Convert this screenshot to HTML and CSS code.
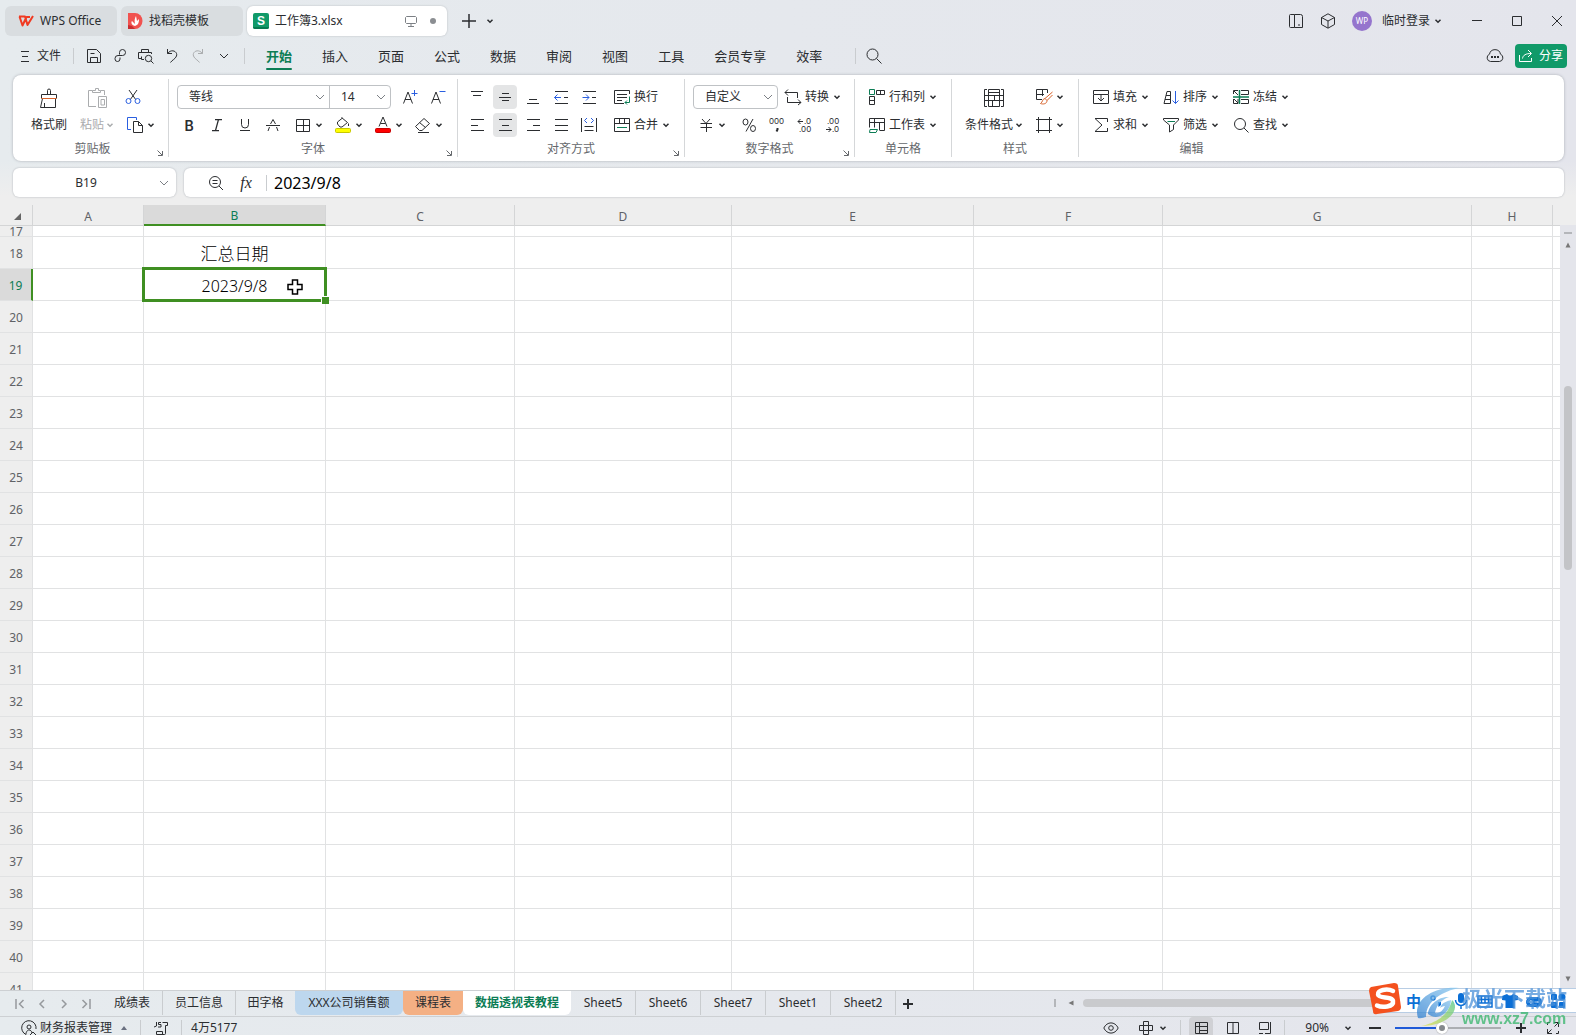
FILE: index.html
```html
<!DOCTYPE html>
<html lang="zh-CN">
<head>
<meta charset="utf-8">
<title>工作簿3.xlsx - WPS Office</title>
<link rel="stylesheet" href="styles.css">
</head>
<body>
<svg class="sprite" aria-hidden="true">
  <symbol id="caret" viewBox="0 0 8 8"><path d="M1.5 2.8 4 5.2 6.5 2.8" stroke-width="1.5"/></symbol>
  <symbol id="chevron" viewBox="0 0 10 10"><path d="M1 3 5 7 9 3"/></symbol>
  <symbol id="launcher" viewBox="0 0 8 8"><path d="M1.5 1.5 6 6M6.500 2v4.500H2"/></symbol>
</svg>

<header class="title-bar">
  <nav class="doc-tabs" aria-label="文档">
    <button class="doc-tab home-tab">
      <svg width="16" height="12" viewBox="0 0 16 12"><path d="M1 1.500H7L9.500 10 15 1M1.500 1.500 4.500 10.500 8.500 2H12" stroke="#f03a22" stroke-width="2" fill="none" stroke-linejoin="round"/></svg>
      <span>WPS Office</span>
    </button>
    <button class="doc-tab docer-tab">
      <svg width="15" height="16" viewBox="0 0 15 16"><path d="M0 0H7A7.500 8 0 0 1 7 16H0Z" fill="#f1524f"/><path d="M0 12V16H7L4 13Z" fill="#c92d31"/><path d="M7 13C3 12 3 9 4 8L7 11C6 7 7 5 8 3L9 8 11 6C11 10 10 12 7 13Z" fill="#fff"/></svg>
      <span>找稻壳模板</span>
    </button>
    <button class="doc-tab current-tab">
      <svg width="16" height="16" viewBox="0 0 16 16"><rect width="16" height="16" rx="2" fill="#119a69"/><path d="M0 14H16V14A2 2 0 0 1 14 16H2A2 2 0 0 1 0 14Z" fill="#087a51"/><text x="8" y="12" text-anchor="middle" class="badge-letter">S</text></svg>
      <span class="doc-name">工作簿3.xlsx</span>
      <svg class="line muted" width="12" height="12" viewBox="0 0 12 12"><path d="M1.500 1.500H10.500L11.500 2.500V7.500L10.500 8.500H1.500L.5 7.500V2.500ZM6 9V11.500M3 11.500H9"/></svg>
      <span class="unsaved-dot"></span>
    </button>
  </nav>
  <button class="icon-btn new-tab" aria-label="新建"><svg class="line" width="14" height="14" viewBox="0 0 14 14"><path d="M7 0V14M0 7H14" stroke-width="1.500"/></svg></button>
  <button class="tab-list" aria-label="标签列表"><svg class="line" width="8" height="8"><use href="#caret"/></svg></button>
  <div class="spacer"></div>
  <button class="win-btn" aria-label="侧栏"><svg class="line" width="16" height="16" viewBox="0 0 16 16"><path d="M6.500 1.500H2.500Q1.500 1.500 1.500 2.500V13.500Q1.500 14.500 2.500 14.500H6.500ZM6.500 1.500H12.500Q14.500 1.500 14.500 3.500V14.500H6.500M10 12H12"/></svg></button>
  <button class="win-btn" aria-label="应用"><svg class="line" width="16" height="16" viewBox="0 0 16 16"><path d="M8 .8 14.500 4.500V11.500L8 15.200 1.500 11.500V4.500ZM1.500 4.500 8 8 14.500 4.500M8 8V15"/></svg></button>
  <button class="account"><span class="avatar">WP</span><span>临时登录</span><svg class="line" width="8" height="8"><use href="#caret"/></svg></button>
  <button class="frame-btn" aria-label="最小化"><svg class="line" width="12" height="12" viewBox="0 0 12 12"><path d="M1 5.500H11"/></svg></button>
  <button class="frame-btn" aria-label="最大化"><svg class="line" width="12" height="12" viewBox="0 0 12 12"><path d="M1.500 1.500H10.500V10.500H1.500Z"/></svg></button>
  <button class="frame-btn" aria-label="关闭"><svg class="line" width="12" height="12" viewBox="0 0 12 12"><path d="M1 1 11 11M11 1 1 11"/></svg></button>
</header>

<div class="menu-bar">
  <button class="file-btn"><svg class="line" width="10" height="12" viewBox="0 0 10 12"><path d="M1 1.500H9M2 6.500H8M1 11.500H9"/></svg><span>文件</span></button>
  <span class="rule"></span>
  <div class="quick">
    <button class="quick-btn" aria-label="保存"><svg class="line" width="16" height="16" viewBox="0 0 16 16"><path d="M1.500 14.500V1.500H10.500L14.500 5.500V14.500ZM4.500 14.500V9.500H11.500V14.500M4.500 5.500H8.500"/></svg></button>
    <button class="quick-btn" aria-label="输出"><svg class="line" width="16" height="16" viewBox="0 0 16 16"><path d="M7.500 6.500V4.500A3 3 0 1 1 10.500 7.500H6A3 3 0 0 0 3 10.500V11A2.500 2.500 0 0 0 8 11V9.500"/></svg></button>
    <button class="quick-btn" aria-label="打印预览"><svg class="line" width="16" height="16" viewBox="0 0 16 16"><path d="M3.500 4.500V1.500H10.500V4.500M6 11.500H3.500V8.500M3 10.500H.5V4.500H13.500V6M15.500 15.500 13 13"/><circle cx="10.500" cy="10.500" r="3.200"/></svg></button>
    <button class="quick-btn" aria-label="撤消"><svg class="line" width="16" height="16" viewBox="0 0 16 16"><path d="M3.500 1V5.500H8M3.500 5.500C8 0 14 4 12.500 8C11.500 11 8 12 6.500 14.500"/></svg></button>
    <button class="quick-btn" aria-label="恢复" disabled><svg class="line" width="16" height="16" viewBox="0 0 16 16"><path d="M12.500 1V5.500H8M12.500 5.500C8 0 2 4 3.500 8C4.500 11 8 12 9.500 14.500"/></svg></button>
    <button class="quick-btn" aria-label="更多"><svg class="line" width="10" height="10"><use href="#chevron"/></svg></button>
  </div>
  <span class="rule"></span>
  <nav class="menu-tabs" aria-label="功能区">
    <button class="menu-tab active">开始</button>
    <button class="menu-tab">插入</button>
    <button class="menu-tab">页面</button>
    <button class="menu-tab">公式</button>
    <button class="menu-tab">数据</button>
    <button class="menu-tab">审阅</button>
    <button class="menu-tab">视图</button>
    <button class="menu-tab">工具</button>
    <button class="menu-tab">会员专享</button>
    <button class="menu-tab">效率</button>
  </nav>
  <span class="rule find-rule"></span>
  <button class="search-btn" aria-label="搜索"><svg class="line" width="16" height="16" viewBox="0 0 16 16"><circle cx="6.500" cy="6.500" r="5.500"/><path d="M10.500 10.500 15.500 15.500"/></svg></button>
  <div class="spacer"></div>
  <button class="cloud-btn" aria-label="云"><svg class="line" width="18" height="16" viewBox="0 0 18 16"><path d="M4.500 13.500A3.800 3.800 0 0 1 3.500 6.200 5.600 5.600 0 0 1 14.500 6.200 3.800 3.800 0 0 1 13.500 13.500Z"/><path d="M5 9H7M8 9H10M11 9H13" stroke-width="2"/></svg></button>
  <button class="share-btn"><svg class="line" width="14" height="14" viewBox="0 0 14 14"><path d="M.5 6V12.500H12.500V9M3.500 9.500C4 6 7 4.500 12 4.500M9 1 12.500 4.500 9 8"/></svg><span>分享</span></button>
</div>

<section class="ribbon" aria-label="开始">
  <div class="group clipboard">
    <div class="tools">
      <button class="big"><svg class="line" width="20" height="20" viewBox="0 0 20 20"><path d="M8.500 6.500V2.500A1.500 1.500 0 0 1 11.500 2.500V6.500M2.500 10.500V6.500H17.500V10.500M3.500 10.500 1.500 19.500H16.500V10.500M5.500 19V15"/><path class="orange" d="M2.500 10.500H17.500"/></svg><span>格式刷</span></button>
      <button class="big" disabled><svg class="line" width="20" height="20" viewBox="0 0 20 20"><path d="M5.500 2.500H1.500V18.500H9M13.500 2.500H17.500V7M5.500 4.500V2.500H8.500V.5H11.500V2.500H13.500V4.500ZM11.500 8.500H19.500V19.500H11.500ZM14 11.500H17.500V17H14Z"/></svg><span>粘贴<svg class="line" width="8" height="8"><use href="#caret"/></svg></span></button>
      <div class="stack">
        <button class="cut" aria-label="剪切"><svg class="line" width="16" height="16" viewBox="0 0 16 16"><path d="M4 1 11 11M12 1 5 11"/><g class="blue"><circle cx="3.500" cy="12" r="2.500"/><circle cx="12.500" cy="12" r="2.500"/></g></svg></button>
        <button class="drop" aria-label="复制"><svg class="line" width="20" height="20" viewBox="0 0 20 20"><path class="blue" d="M6 14.500H2.500V2.500H11.500V5"/><path d="M8.500 6.500H13.500L17.500 10.500V17.500H8.500ZM13.500 6.500V10.500H17.500"/></svg><svg class="line" width="8" height="8"><use href="#caret"/></svg></button>
      </div>
    </div>
    <div class="caption"><span>剪贴板</span><svg class="line" width="8" height="8"><use href="#launcher"/></svg></div>
  </div>

  <div class="group font">
    <div class="tools rows">
      <div class="row">
        <div class="combo">
          <label class="pick family"><select aria-label="字体"><option>等线</option></select><svg class="line muted" width="10" height="10"><use href="#chevron"/></svg></label>
          <label class="pick size"><select aria-label="字号"><option>14</option></select><svg class="line muted" width="10" height="10"><use href="#chevron"/></svg></label>
        </div>
        <button class="tool" aria-label="增大字号"><svg class="line" width="16" height="16" viewBox="0 0 16 16"><path d="M1.500 14.500 6 3 10.500 14.500M3 10.500H9"/><path class="blue" d="M12.500 1V7M9.500 4.500H15.500"/></svg></button>
        <button class="tool" aria-label="减小字号"><svg class="line" width="16" height="16" viewBox="0 0 16 16"><path d="M1.500 14.500 6 3 10.500 14.500M3 10.500H9"/><path class="blue" d="M9.500 2.500H15.500"/></svg></button>
      </div>
      <div class="row">
        <button class="tool letter bold">B</button>
        <button class="tool" aria-label="倾斜"><svg class="line" width="12" height="12" viewBox="0 0 12 12"><path d="M4 .5H11M1 11.500H8M7.500 .5 4.500 11.500" stroke-width="1.250"/></svg></button>
        <button class="tool" aria-label="下划线"><svg class="line" width="12" height="12" viewBox="0 0 12 12"><path d="M2.500 0V5.500A3.500 3.500 0 0 0 9.500 5.500V0M1 11.500H11"/></svg></button>
        <button class="tool" aria-label="删除线"><svg class="line" width="14" height="12" viewBox="0 0 14 12"><path d="M0 6.500H14M4.500 5 7 .5 9.500 5M3.500 8 2 12M10.500 8 12 12"/></svg></button>
        <div class="row colors">
        <button class="drop" aria-label="边框"><svg class="line" width="20" height="20" viewBox="0 0 20 20"><path d="M3.500 4.500H16.500V16.500H3.500ZM10.500 4.500V16.500M3.500 10.500H16.500"/></svg><svg class="line" width="8" height="8"><use href="#caret"/></svg></button>
        <button class="drop" aria-label="填充颜色"><svg class="line" width="20" height="20" viewBox="0 0 20 20"><path d="M8.500 2.500 14.500 7.500 9 12H7L4.500 9V7L9.500 3M15.500 8.500V11"/><rect x="2.500" y="13.500" width="15" height="4" rx="1" fill="#ff0" stroke="#c8c800"/></svg><svg class="line" width="8" height="8"><use href="#caret"/></svg></button>
        <button class="drop" aria-label="字体颜色"><svg class="line" width="20" height="20" viewBox="0 0 20 20"><path d="M6 11.500 10 2 14 11.500M7.500 8.500H12.500"/><rect x="2.500" y="13.500" width="15" height="4" rx="1" fill="#f00" stroke="#c80000"/></svg><svg class="line" width="8" height="8"><use href="#caret"/></svg></button>
        <button class="drop" aria-label="清除"><svg class="line" width="20" height="20" viewBox="0 0 20 20"><path d="M11 3.500 16.500 8.500 9 15.500H6.500L2.500 11.500ZM6.500 7.500 12.500 12.500M5 17.500H16"/></svg><svg class="line" width="8" height="8"><use href="#caret"/></svg></button>
        </div>
      </div>
    </div>
    <div class="caption"><span>字体</span><svg class="line" width="8" height="8"><use href="#launcher"/></svg></div>
  </div>

  <div class="group align">
    <div class="tools rows">
      <div class="row">
        <button class="tool" aria-label="顶端对齐"><svg class="line" width="14" height="14" viewBox="0 0 14 14"><path d="M1 1.500H13M3 5.500H11"/></svg></button>
        <button class="tool on" aria-label="垂直居中"><svg class="line" width="14" height="14" viewBox="0 0 14 14"><path d="M4 3.500H11M1 7.500H13M4 10.500H11"/></svg></button>
        <button class="tool" aria-label="底端对齐"><svg class="line" width="14" height="14" viewBox="0 0 14 14"><path d="M3 9.500H11M1 13.500H13"/></svg></button>
        <button class="tool" aria-label="减少缩进"><svg class="line" width="14" height="14" viewBox="0 0 14 14"><path d="M1 1.500H14M1 13.500H14M10 7.500H14"/><path class="blue" d="M.5 7.500H7M3.500 4.500.5 7.500 3.500 10.500"/></svg></button>
        <button class="tool" aria-label="增加缩进"><svg class="line" width="14" height="14" viewBox="0 0 14 14"><path d="M1 1.500H14M1 13.500H14M10 7.500H14"/><path class="blue" d="M.5 7.500H7M4 4.500 7 7.500 4 10.500"/></svg></button>
        <button class="wide after-tools"><svg class="line" width="16" height="16" viewBox="0 0 16 16"><path d="M10 14.500H.5V1.500H15.500V5M3 5.500H13M3 8.500H13M3 11.500H8"/><path class="green" d="M15.500 7.500V13.500H11M13 11.500 11 13.500 13 15.500"/></svg><span>换行</span></button>
      </div>
      <div class="row">
        <button class="tool" aria-label="左对齐"><svg class="line" width="14" height="14" viewBox="0 0 14 14"><path d="M1 1.500H14M1 7.500H8M1 12.500H14"/></svg></button>
        <button class="tool on" aria-label="水平居中"><svg class="line" width="14" height="14" viewBox="0 0 14 14"><path d="M1 1.500H14M4 7.500H11M1 12.500H14"/></svg></button>
        <button class="tool" aria-label="右对齐"><svg class="line" width="14" height="14" viewBox="0 0 14 14"><path d="M1 1.500H14M7 7.500H14M1 12.500H14"/></svg></button>
        <button class="tool" aria-label="两端对齐"><svg class="line" width="14" height="14" viewBox="0 0 14 14"><path d="M1 1.500H14M1 7.500H14M1 12.500H14"/></svg></button>
        <button class="tool" aria-label="分散对齐"><svg class="line" width="16" height="16" viewBox="0 0 16 16"><path d="M.5 1V15M15.500 1V15M3.500 9.500H12.500M3.500 13.500H12.500"/><path class="blue" d="M6 1 3.500 3.500 6 6M10 1 12.500 3.500 10 6"/></svg></button>
        <button class="wide after-tools"><svg class="line" width="16" height="16" viewBox="0 0 16 16"><path d="M.5 1.500H15.500V14.500H.5ZM.5 6.500H15.500M5.500 1.500V6.500M10.500 1.500V6.500"/><path class="green" d="M3 10.500H13"/></svg><span>合并</span><svg class="line" width="8" height="8"><use href="#caret"/></svg></button>
      </div>
    </div>
    <div class="caption"><span>对齐方式</span><svg class="line" width="8" height="8"><use href="#launcher"/></svg></div>
  </div>

  <div class="group number">
    <div class="tools rows">
      <div class="row">
        <div class="combo"><label class="pick format"><select aria-label="数字格式"><option>自定义</option></select><svg class="line muted" width="10" height="10"><use href="#chevron"/></svg></label></div>
        <button class="wide"><svg class="line" width="16" height="16" viewBox="0 0 16 16"><path d="M0 3.500H12.500V9M3 .5 0 3.500 3 6.500M2.500 8V13.500H16M13 10.500 16 13.500 13 16"/></svg><span>转换</span><svg class="line" width="8" height="8"><use href="#caret"/></svg></button>
      </div>
      <div class="row">
        <button class="drop" aria-label="货币"><svg class="line" width="20" height="20" viewBox="0 0 20 20"><path d="M6 4 10 8.500 14 4M4.500 8.500H16M4.500 12.500H16M10.500 8.500V17"/></svg><svg class="line" width="8" height="8"><use href="#caret"/></svg></button>
        <button class="tool percent" aria-label="百分比"><svg class="line" width="14" height="14" viewBox="0 0 14 14"><path d="M11 1 4 13.500"/><ellipse cx="3.500" cy="4" rx="2.500" ry="3"/><ellipse cx="11" cy="10.500" rx="2.500" ry="3"/></svg></button>
        <button class="tool" aria-label="千位分隔"><svg class="line" width="18" height="18" viewBox="0 0 18 18"><text class="digits" x="1" y="8">000</text><path d="M9.500 12V13.500L8.500 15.500" stroke-width="2"/></svg></button>
        <button class="tool" aria-label="增加小数位"><svg class="line" width="18" height="18" viewBox="0 0 18 18"><text class="digits" x="8" y="8">.0</text><text class="digits" x="3" y="16">.00</text><path d="M2 5.500H7M4.500 3 2 5.500 4.500 8"/></svg></button>
        <button class="tool" aria-label="减少小数位"><svg class="line" width="18" height="18" viewBox="0 0 18 18"><text class="digits" x="3" y="8">.00</text><text class="digits" x="8" y="16">.0</text><path d="M2 13.500H7M4.500 11 7 13.500 4.500 16"/></svg></button>
      </div>
    </div>
    <div class="caption"><span>数字格式</span><svg class="line" width="8" height="8"><use href="#launcher"/></svg></div>
  </div>

  <div class="group cells">
    <div class="tools rows">
      <button class="wide"><svg class="line" width="16" height="16" viewBox="0 0 16 16"><path d="M7.500 5.500V1.500H15.500V5.500ZM11.500 1.500V5.500M.5 7.500H5.500V15.500H.5ZM.5 11.500H5.500"/><path class="green" d="M.5 .5H5.500V5.500H.5Z"/></svg><span>行和列</span><svg class="line" width="8" height="8"><use href="#caret"/></svg></button>
      <button class="wide"><svg class="line" width="16" height="16" viewBox="0 0 16 16"><path d="M.5 10.500V1.500H15.500V13.500H11M.5 5.500H15.500M5.500 1.500V10.500M10.500 5.500V13.500"/><path class="green" d="M1 12.500H8.500L7 15.500H.5Z"/></svg><span>工作表</span><svg class="line" width="8" height="8"><use href="#caret"/></svg></button>
    </div>
    <div class="caption"><span>单元格</span></div>
  </div>

  <div class="group styles">
    <div class="tools">
      <button class="big conditional"><svg class="line" width="20" height="20" viewBox="0 0 20 20"><path d="M3 1.500H.5V18.500H3M17 1.500H19.500V18.500H17M4.500 1.500H15.500V18.500H4.500ZM.5 7.500H19.500M.5 12.500H19.500M10.500 7.500V12.500M8.500 12.500V18.500M4.500 4.500H15.500"/></svg><span>条件格式<svg class="line" width="8" height="8"><use href="#caret"/></svg></span></button>
      <div class="stack">
        <button class="drop" aria-label="表格样式"><svg class="line" width="20" height="20" viewBox="0 0 20 20"><path d="M8 12.500H2.500V2.500H13.500V6M2.500 7.500H10M8.500 2.500V9"/><path class="orange" d="M18.500 5 11 11.500 13 13.500 18.500 8M11 11.500C8 12 9 15 6.500 16.500 9 17.500 13 17 13 13.500"/></svg><svg class="line" width="8" height="8"><use href="#caret"/></svg></button>
        <button class="drop" aria-label="单元格样式"><svg class="line" width="20" height="20" viewBox="0 0 20 20"><path d="M2 4.500H18M2 15.500H18M4.500 2V18M15.500 2V18"/></svg><svg class="line" width="8" height="8"><use href="#caret"/></svg></button>
      </div>
    </div>
    <div class="caption"><span>样式</span></div>
  </div>

  <div class="group edit">
    <div class="tools matrix">
      <button class="wide"><svg class="line" width="16" height="16" viewBox="0 0 16 16"><path d="M.5 5V1.500H15.500V5M3.500 5.500H.5V14.500H15.500V5.500H12.500M3 5.500H13M8 5.500V11.500M5 9 8 12 11 9"/></svg><span>填充</span><svg class="line" width="8" height="8"><use href="#caret"/></svg></button>
      <button class="wide"><svg class="line" width="16" height="16" viewBox="0 0 16 16"><path d="M1 14.500 4 2.500H7.500V14.500H1ZM2 10.500H7.500M3 6.500H7.500"/><path class="blue" d="M12.500 2V14.500M9.500 11.500 12.500 14.500 15.500 11.500"/></svg><span>排序</span><svg class="line" width="8" height="8"><use href="#caret"/></svg></button>
      <button class="wide"><svg class="line" width="16" height="16" viewBox="0 0 16 16"><path d="M5 1.500H.5V5M8 1.500H15.500V5.500H8M8 10.500H15.500V14.500H8M.5 10V14.500H5V10M1 2 5 6M1 10 5 14"/><path class="green" d="M0 8H16M6.500 1V15" stroke-width="1.500"/></svg><span>冻结</span><svg class="line" width="8" height="8"><use href="#caret"/></svg></button>
      <button class="wide"><svg class="line" width="16" height="16" viewBox="0 0 16 16"><path d="M14.500 5V1.500H2L9 8 2 14.500H14.500V11"/></svg><span>求和</span><svg class="line" width="8" height="8"><use href="#caret"/></svg></button>
      <button class="wide"><svg class="line" width="16" height="16" viewBox="0 0 16 16"><path d="M.5 1.500H15.500V3L10.500 8V12.500L6.500 15V8L.5 3Z"/><path class="green" d="M4.500 4.500H12"/></svg><span>筛选</span><svg class="line" width="8" height="8"><use href="#caret"/></svg></button>
      <button class="wide"><svg class="line" width="16" height="16" viewBox="0 0 16 16"><circle cx="7" cy="7" r="5.500"/><path d="M11 11 15.500 15.500"/></svg><span>查找</span><svg class="line" width="8" height="8"><use href="#caret"/></svg></button>
    </div>
    <div class="caption"><span>编辑</span></div>
  </div>
</section>

<div class="formula-row">
  <label class="name-box"><input value="B19" aria-label="名称框"><svg class="line muted" width="10" height="10"><use href="#chevron"/></svg></label>
  <div class="formula-box">
    <button class="formula-btn" aria-label="浏览公式结果"><svg class="line" width="16" height="16" viewBox="0 0 16 16"><circle cx="7" cy="7" r="5.500"/><path d="M11 11 15 15M4.500 5.500H9.500M4.500 8.500H9.500"/></svg></button>
    <button class="formula-btn fx">fx</button>
    <span class="rule"></span>
    <input class="formula" value="2023/9/8" aria-label="编辑栏">
  </div>
</div>

<main class="workspace">
  <div class="grid">
    <table>
      <colgroup><col class="c-head"><col class="c-a"><col class="c-b"><col class="c-c"><col class="c-d"><col class="c-e"><col class="c-f"><col class="c-g"><col class="c-h"><col></colgroup>
      <thead><tr><th class="corner"><svg width="7" height="7" viewBox="0 0 7 7"><path d="M7 0V7H0Z" fill="#666"/></svg></th><th>A</th><th class="picked">B</th><th>C</th><th>D</th><th>E</th><th>F</th><th>G</th><th>H</th><th></th></tr></thead>
      <tbody>
      <tr class="cut-row"><th><div>17</div></th><td></td><td></td><td></td><td></td><td></td><td></td><td></td><td></td><td></td></tr>
      <tr><th>18</th><td></td><td class="label-cell">汇总日期</td><td></td><td></td><td></td><td></td><td></td><td></td><td></td></tr>
      <tr><th class="picked">19</th><td></td><td class="selected">2023/9/8<svg class="pointer" width="16" height="16" viewBox="0 0 16 16"><path d="M5.500 1H10.500V5.500H15V10.500H10.500V15H5.500V10.500H1V5.500H5.500Z" fill="#fff" stroke="#000" stroke-width="1.500"/></svg></td><td></td><td></td><td></td><td></td><td></td><td></td><td></td></tr>
      <tr><th>20</th><td></td><td></td><td></td><td></td><td></td><td></td><td></td><td></td><td></td></tr>
      <tr><th>21</th><td></td><td></td><td></td><td></td><td></td><td></td><td></td><td></td><td></td></tr>
      <tr><th>22</th><td></td><td></td><td></td><td></td><td></td><td></td><td></td><td></td><td></td></tr>
      <tr><th>23</th><td></td><td></td><td></td><td></td><td></td><td></td><td></td><td></td><td></td></tr>
      <tr><th>24</th><td></td><td></td><td></td><td></td><td></td><td></td><td></td><td></td><td></td></tr>
      <tr><th>25</th><td></td><td></td><td></td><td></td><td></td><td></td><td></td><td></td><td></td></tr>
      <tr><th>26</th><td></td><td></td><td></td><td></td><td></td><td></td><td></td><td></td><td></td></tr>
      <tr><th>27</th><td></td><td></td><td></td><td></td><td></td><td></td><td></td><td></td><td></td></tr>
      <tr><th>28</th><td></td><td></td><td></td><td></td><td></td><td></td><td></td><td></td><td></td></tr>
      <tr><th>29</th><td></td><td></td><td></td><td></td><td></td><td></td><td></td><td></td><td></td></tr>
      <tr><th>30</th><td></td><td></td><td></td><td></td><td></td><td></td><td></td><td></td><td></td></tr>
      <tr><th>31</th><td></td><td></td><td></td><td></td><td></td><td></td><td></td><td></td><td></td></tr>
      <tr><th>32</th><td></td><td></td><td></td><td></td><td></td><td></td><td></td><td></td><td></td></tr>
      <tr><th>33</th><td></td><td></td><td></td><td></td><td></td><td></td><td></td><td></td><td></td></tr>
      <tr><th>34</th><td></td><td></td><td></td><td></td><td></td><td></td><td></td><td></td><td></td></tr>
      <tr><th>35</th><td></td><td></td><td></td><td></td><td></td><td></td><td></td><td></td><td></td></tr>
      <tr><th>36</th><td></td><td></td><td></td><td></td><td></td><td></td><td></td><td></td><td></td></tr>
      <tr><th>37</th><td></td><td></td><td></td><td></td><td></td><td></td><td></td><td></td><td></td></tr>
      <tr><th>38</th><td></td><td></td><td></td><td></td><td></td><td></td><td></td><td></td><td></td></tr>
      <tr><th>39</th><td></td><td></td><td></td><td></td><td></td><td></td><td></td><td></td><td></td></tr>
      <tr><th>40</th><td></td><td></td><td></td><td></td><td></td><td></td><td></td><td></td><td></td></tr>
      <tr><th>41</th><td></td><td></td><td></td><td></td><td></td><td></td><td></td><td></td><td></td></tr>
      </tbody>
    </table>
  </div>
  <div class="v-scroll">
    <span class="split-grip"></span>
    <svg width="8" height="8" viewBox="0 0 8 8"><path d="M4 1.500 6.500 6.500H1.500Z" fill="#777"/></svg>
    <div class="v-track"><span class="v-before"></span><span class="v-thumb"></span><span class="v-after"></span></div>
    <svg width="8" height="8" viewBox="0 0 8 8"><path d="M4 6.500 6.500 1.500H1.500Z" fill="#777"/></svg>
  </div>
</main>

<div class="sheet-bar">
  <div class="sheet-nav">
    <button aria-label="第一张"><svg class="line" width="10" height="10" viewBox="0 0 10 10"><path d="M1 0V10M8.500 1 4.500 5 8.500 9" stroke-width="1.500"/></svg></button>
    <button aria-label="上一张"><svg class="line" width="10" height="10" viewBox="0 0 10 10"><path d="M7 1 3 5 7 9" stroke-width="1.500"/></svg></button>
    <button aria-label="下一张"><svg class="line" width="10" height="10" viewBox="0 0 10 10"><path d="M3 1 7 5 3 9" stroke-width="1.500"/></svg></button>
    <button aria-label="最后一张"><svg class="line" width="10" height="10" viewBox="0 0 10 10"><path d="M9 0V10M1.500 1 5.500 5 1.500 9" stroke-width="1.500"/></svg></button>
  </div>
  <button class="sheet">成绩表</button>
  <button class="sheet">员工信息</button>
  <button class="sheet last-plain">田字格</button>
  <button class="sheet tint-blue">XXX公司销售额</button>
  <button class="sheet tint-orange">课程表</button>
  <button class="sheet current">数据透视表教程</button>
  <button class="sheet numbered">Sheet5</button>
  <button class="sheet numbered">Sheet6</button>
  <button class="sheet numbered">Sheet7</button>
  <button class="sheet numbered">Sheet1</button>
  <button class="sheet numbered">Sheet2</button>
  <button class="add-sheet" aria-label="新建工作表"><svg class="line" width="10" height="10" viewBox="0 0 10 10"><path d="M5 0V10M0 5H10" stroke-width="2"/></svg></button>
  <div class="spacer"></div>
  <div class="h-scroll">
    <span class="h-grip"></span>
    <svg width="8" height="8" viewBox="0 0 8 8"><path d="M1.500 4 6.500 1.500V6.500Z" fill="#777"/></svg>
    <span class="h-thumb"></span>
  </div>
</div>

<footer class="status-bar">
  <button class="cloud-doc"><svg class="line" width="16" height="16" viewBox="0 0 16 16"><path d="M5 14.500A7.200 7.200 0 1 1 15 9M5 14.500C5 11 7 10 8 10S11 11 11 13M9 15 12 12 15 15"/><circle cx="8" cy="7" r="2"/></svg><span>财务报表管理</span><svg width="8" height="8" viewBox="0 0 8 8"><path d="M4 2 7 6H1Z" fill="#6a7080"/></svg></button>
  <span class="rule"></span>
  <button class="script-btn" aria-label="JS宏"><svg class="line" width="16" height="16" viewBox="0 0 16 16"><path d="M3.500 2V6L1 7M8 2.500H5.500V4.500H8V7H5M9.500 2.500H14.500V5.500H12.500V13.500Q12.500 14.500 11.500 14.500H3.500V11.500H9.500V14"/></svg></button>
  <span class="rule"></span>
  <span class="sum">4万5177</span>
  <div class="spacer"></div>
  <button class="status-btn eye" aria-label="护眼模式"><svg class="line" width="16" height="12" viewBox="0 0 16 12"><path d="M.8 6C4-.8 12-.8 15.200 6 12 12.800 4 12.800.8 6Z"/><circle cx="8" cy="6" r="2.300"/></svg></button>
  <button class="drop" aria-label="阅读模式"><svg class="line" width="14" height="14" viewBox="0 0 14 14"><path d="M4.500 4.500V.5H9.500V4.500H13.500V9.500H9.500V13.500H4.500V9.500H.5V4.500ZM4.500 4.500H9.500V9.500H4.500Z"/></svg><svg class="line" width="8" height="8"><use href="#caret"/></svg></button>
  <span class="rule"></span>
  <div class="views">
    <button class="view on" aria-label="普通视图"><svg class="line" width="14" height="14" viewBox="0 0 14 14"><path d="M1.500 1.500H13.500V12.500H1.500ZM1.500 5.500H13.500M5.500 1.500V12.500M5.500 9.500H13.500"/></svg></button>
    <button class="view" aria-label="分页预览"><svg class="line" width="14" height="14" viewBox="0 0 14 14"><path d="M1.500 1.500H12.500V12.500H1.500ZM7 1.500V12.500"/></svg></button>
    <button class="view" aria-label="页面布局"><svg class="line" width="14" height="14" viewBox="0 0 14 14"><path d="M1.500 1.500H10.500V8.500H1.500ZM12.500 1V12.500H7M1 12.500H5"/></svg></button>
  </div>
  <span class="rule"></span>
  <button class="zoom-value"><span>90%</span><svg class="line" width="8" height="8"><use href="#caret"/></svg></button>
  <button class="status-btn" aria-label="缩小"><svg class="line" width="12" height="12" viewBox="0 0 12 12"><path d="M0 6H12" stroke-width="2"/></svg></button>
  <input class="zoom-slider" type="range" min="0" max="100" value="44" aria-label="缩放">
  <button class="status-btn zoom-in" aria-label="放大"><svg class="line" width="10" height="10" viewBox="0 0 10 10"><path d="M5 0V10M0 5H10" stroke-width="2"/></svg></button>
  <button class="status-btn" aria-label="全屏"><svg class="line" width="14" height="14" viewBox="0 0 14 14"><path d="M8 1.500H12.500V6M12.500 1.500 8.500 5.500M6 12.500H1.500V8M1.500 12.500 5.500 8.500M1.500 4V1.500H4M12.500 10V12.500H10"/></svg></button>
</footer>

<aside class="ime" aria-label="输入法">
  <div class="ime-bar">
    <span class="ime-mode">中</span>
    <svg width="16" height="16" viewBox="0 0 16 16"><circle cx="4" cy="5" r="2" fill="none" stroke="#0b6fd6" stroke-width="1.500"/><path d="M9 9H12V12L9.500 14Z" fill="#0b6fd6"/></svg>
    <svg width="16" height="16" viewBox="0 0 16 16"><rect x="5" y="0" width="6" height="10" rx="3" fill="#0b6fd6"/><path d="M2.500 7A5.500 5.500 0 0 0 13.500 7M8 12.500V16" fill="none" stroke="#0b6fd6" stroke-width="1.500"/></svg>
    <svg width="16" height="16" viewBox="0 0 16 16"><path d="M1 3H15V14H1ZM1 6.500H15M1 10H15M4.500 3V10M8 3V10M11.500 3V10" fill="none" stroke="#0b6fd6" stroke-width="1.500"/></svg>
    <svg width="16" height="16" viewBox="0 0 16 16"><path d="M0 3 5 1Q8 4 11 1L16 3V7L12.500 7.500V15H3.500V7.500L0 7Z" fill="#0b6fd6"/></svg>
    <svg width="16" height="16" viewBox="0 0 16 16"><rect x="0" y="4" width="16" height="10" rx="5" fill="#0b6fd6"/><path d="M3 9H7M9 9H13M5 7V11" stroke="#fff"/></svg>
    <svg width="16" height="16" viewBox="0 0 16 16"><g fill="#0b6fd6"><rect x="1" y="1" width="6" height="6" rx="1"/><circle cx="12" cy="4" r="3.500"/><rect x="1" y="9" width="6" height="6" rx="1"/><rect x="9" y="9" width="6" height="6" rx="1"/></g></svg>
  </div>
  <svg class="ime-logo" width="34" height="32" viewBox="0 0 34 32"><path d="M3 4 26 0Q30 0 30 3L33 24Q33 27 30 28L9 31Q5 32 5 28L1 8Q1 5 3 4Z" fill="#f4511e"/><path d="M25 8C19 5 9 7 10 11.500 11 16 24 13 25 18 26 24 14 25 9 22.500" fill="none" stroke="#fff" stroke-width="4.500" stroke-linecap="round"/></svg>
</aside>

<aside class="watermark">
  <svg width="46" height="42" viewBox="0 0 46 42">
    <defs>
      <linearGradient id="wm-blue" x1="0" y1="1" x2="1" y2="0"><stop offset="0" stop-color="#2f7fd0"/><stop offset="1" stop-color="#8ecbf0"/></linearGradient>
      <linearGradient id="wm-green" x1="0" y1="1" x2="1" y2="0"><stop offset="0" stop-color="#e6e24a"/><stop offset="1" stop-color="#4cc48a"/></linearGradient>
    </defs>
    <path d="M2 32C-4 14 18 0 43 2 28 5 10 14 10 31 8 31 6 33 2 32Z" fill="url(#wm-blue)"/>
    <path d="M12 28C12 20 22 10 33 11 24 14 20 21 19 27 24 28 27 24 29 20 27 20 25 21 24 22 26 16 32 15 35 14 35 26 22 36 12 28Z" fill="url(#wm-blue)"/>
    <path d="M36 14C45 22 34 40 5 40 20 37 32 30 36 14Z" fill="url(#wm-green)"/>
  </svg>
  <div class="mark-text"><span class="mark-name">极光下载站</span><span class="mark-url">www.xz7.com</span></div>
</aside>
</body>
</html>
```
FILE: styles.css
```css
:root {
  --ink: #2b2d30;
  --muted: #7c8085;
  --green: #0c7d55;
  --select: #3f8f22;
  --line: #c9cccf;
}

* { box-sizing: border-box; }

body {
  margin: 0;
  height: 100vh;
  display: flex;
  flex-direction: column;
  overflow: hidden;
  background: linear-gradient(90deg, #e6ebee, #e4e5ec);
  color: var(--ink);
  font: 12px/16px "Noto Sans", "Noto Sans CJK SC", sans-serif;
}

button, input, select {
  font: inherit;
  color: inherit;
  border: 0;
  padding: 0;
  margin: 0;
  background: none;
  outline: none;
}

button {
  display: flex;
  align-items: center;
  justify-content: center;
  white-space: nowrap;
}

button:disabled { color: #aaacae; }
svg { display: block; flex: none; overflow: visible; }
.sprite { position: absolute; width: 0; height: 0; }
.line { fill: none; stroke: currentColor; }
.muted { color: var(--muted); }
.blue { stroke: #2a5fe0; }
.green { stroke: var(--green); }
.orange { stroke: #d8622a; }
.spacer { flex: 1; }
.rule { width: 1px; height: 16px; background: var(--line); }

/* title bar */
.title-bar { display: flex; align-items: center; height: 41px; padding: 0 9px 0 5px; flex: none; }
.doc-tabs { display: flex; gap: 4px; }
.doc-tab { height: 30px; border-radius: 6px; background: #d9dde0; justify-content: flex-start; gap: 6px; }
.home-tab { width: 112px; padding-left: 13px; }
.docer-tab { width: 122px; padding-left: 7px; }
.current-tab { width: 200px; padding: 0 11px 0 6px; background: #fff; box-shadow: 0 0 2px #b4b8bc; }
.doc-name { flex: 1; text-align: left; }
.badge-letter { font: bold 12px "Liberation Sans", sans-serif; fill: #fff; }
.unsaved-dot { width: 6px; height: 6px; margin-left: 7px; border-radius: 50%; background: #8b8e92; }
.new-tab { width: 30px; height: 30px; margin-left: 7px; }
.tab-list { width: 12px; }
.win-btn { width: 32px; height: 32px; }
.account { gap: 4px; margin-left: 8px; margin-right: 15px; }
.avatar { width: 20px; height: 20px; margin-right: 6px; border-radius: 50%; background: #9575cd; color: #fff; font-size: 8px; line-height: 20px; }
.frame-btn { width: 40px; height: 30px; }
.title-bar .frame-btn:last-child { width: 20px; margin-left: 10px; }

/* menu bar */
.menu-bar { display: flex; align-items: center; height: 34px; padding: 0 9px 4px 20px; flex: none; }
.file-btn { gap: 7px; margin-right: 12px; }
.quick { display: flex; margin: 0 7px; }
.quick-btn { width: 26px; height: 26px; }
.menu-tabs { display: flex; margin-left: 6px; }
.menu-tab { padding: 0 15px; height: 28px; font-size: 13px; position: relative; }
.menu-tab.active { color: var(--green); font-weight: 700; }
.menu-tab.active::after { content: ""; position: absolute; left: 15px; right: 15px; bottom: 0; height: 2px; border-radius: 1px; background: var(--green); }
.find-rule { margin-left: 18px; }
.search-btn { width: 36px; height: 26px; }
.cloud-btn { margin-right: 11px; }
.share-btn { width: 52px; height: 24px; gap: 6px; border-radius: 4px; background: #119a69; color: #fff; }

/* ribbon */
.ribbon { display: flex; flex: none; height: 86px; margin: 0 12px 0 13px; padding: 4px 0; background: #fff; border-radius: 8px; box-shadow: 0 0 3px #a9adb3; }
.group { display: flex; flex-direction: column; padding-top: 4px; border-right: 1px solid #d5d7d9; }
.group:last-child { border-right: 0; }
.tools { display: flex; height: 56px; }
.rows, .stack { display: flex; flex-direction: column; align-items: flex-start; }
.row { display: flex; align-items: center; height: 28px; }
.caption { display: grid; grid-template-columns: 12px 1fr 12px; align-items: center; padding-top: 2px; line-height: 16px; height: 18px; color: #65686c; text-align: center; }
.caption span { grid-column: 2; }
.caption svg { margin-top: 8px; }
.clipboard { width: 156px; }
.clipboard .tools { padding-left: 12px; }
.clipboard .caption { padding-left: 4px; }
.font { width: 289px; }
.font .tools { padding-left: 6px; }
.align { width: 227px; }
.align .tools { padding-left: 5px; }
.number { width: 170px; }
.number .tools { padding-left: 7px; }
.cells { width: 97px; }
.cells .tools { padding-left: 7px; }
.styles { width: 127px; }
.styles .tools { padding-left: 6px; }
.edit .tools { padding-left: 7px; }
.edit .caption { padding-left: 8px; }
.matrix { display: grid; grid-template-columns: repeat(3, 70px); grid-template-rows: 28px 28px; }

.big { flex-direction: column; justify-content: flex-start; width: 48px; padding-top: 5px; gap: 9px; }
.big span { display: flex; align-items: center; gap: 2px; }
.big.conditional { width: 72px; }
.tool { width: 28px; height: 28px; }
.tool.on { width: 24px; height: 24px; margin: 0 2px; border-radius: 4px; background: #e4e5e6; }
.cut { width: 24px; height: 28px; }
.drop { width: 40px; height: 28px; padding: 0 6px 0 4px; gap: 2px; }
.colors { margin-left: 2px; }
.wide { height: 28px; padding: 0 7px; gap: 4px; }
.after-tools { margin-left: 4px; }
.percent { margin-left: 3px; }
.letter { font: 600 14px Inter, sans-serif; }
.digits { font: 8px Inter, sans-serif; fill: var(--ink); stroke: none; }

.combo { display: flex; height: 24px; border: 1px solid #bfc2c5; border-radius: 4px; margin: 0 5px 0 2px; }
.number .combo { margin: 0 0 0 1px; }
.pick { display: grid; align-items: center; }
.pick select, .pick svg { grid-area: 1 / 1; }
.pick select { appearance: none; width: 100%; height: 22px; padding-left: 11px; }
.pick svg { justify-self: end; margin-right: 4px; pointer-events: none; }
.family { width: 152px; border-right: 1px solid #bfc2c5; }
.size { width: 60px; }
.format { width: 83px; }

/* formula row */
.formula-row { display: flex; gap: 8px; flex: none; padding: 7px 12px 8px 13px; background: linear-gradient(transparent, #eee 80%); }
.name-box, .formula-box { display: flex; align-items: center; height: 29px; background: #fff; border-radius: 6px; box-shadow: 0 0 2px #a9adb3; }
.name-box { width: 163px; padding: 0 7px 0 0; }
.name-box input { flex: 1; min-width: 0; text-align: center; }
.formula-box { flex: 1; padding-left: 17px; }
.formula-btn { width: 30px; height: 28px; }
.fx { margin-right: 5px; font: italic 16px "Liberation Serif", serif; }
.formula { flex: 1; margin-left: 7px; font-size: 16px; color: #000; }

/* worksheet */
.workspace { display: flex; flex: 1; min-height: 0; background: #eee; }
.grid { flex: 1; min-width: 0; overflow: hidden; }
table { width: 100%; table-layout: fixed; border-collapse: separate; border-spacing: 0; background: #fff; }
.c-head { width: 33px; }
.c-a { width: 111px; }
.c-b { width: 182px; }
.c-c { width: 189px; }
.c-d { width: 217px; }
.c-e { width: 242px; }
.c-f { width: 189px; }
.c-g { width: 309px; }
.c-h { width: 81px; }
th, td { height: 32px; padding: 3px 0 0; border: solid #e1e2e3; border-width: 0 1px 1px 0; text-align: center; }
th { background: #eee; color: #5f6266; font-weight: 400; line-height: 16px; }
th:last-child, td:last-child { border-right: 0; }
thead th { height: 21px; border-color: #d4d5d6; }
thead .picked { background: #dadada; color: var(--green); border-bottom: 2px solid var(--select); }
tbody th.picked { background: #dadada; color: var(--green); border-right: 2px solid var(--select); }
.corner svg { margin-left: 14px; }
.cut-row th, .cut-row td { height: 11px; padding: 0; }
.cut-row div { height: 10px; line-height: 12px; }
td { color: #000; font-size: 16px; line-height: 24px; font-weight: 300; }
.label-cell { font-size: 17px; }
.selected { position: relative; }
.selected::before { content: ""; position: absolute; inset: -2px -2px -2px -2px; border: 3px solid var(--select); }
.selected::after { content: ""; position: absolute; right: -4px; bottom: -4px; width: 7px; height: 7px; background: var(--select); border: solid #fff; border-width: 1px 0 0 1px; }
.pointer { position: absolute; right: 22px; top: 10px; }

.v-scroll { display: flex; flex-direction: column; align-items: center; width: 16px; margin-top: 20px; padding: 7px 0; background: #e4e5eb; }
.split-grip { width: 8px; height: 2px; margin-bottom: 7px; background: #b4b6ba; }
.v-track { flex: 1; display: flex; flex-direction: column; padding: 4px 0; }
.v-thumb { flex: 184; width: 8px; border-radius: 4px; background: #c3c4c7; }
.v-before { flex: 133; }
.v-after { flex: 400; }

/* sheet tabs */
.sheet-bar { display: flex; align-items: flex-start; flex: none; height: 27px; border: solid #cdd0d3; border-width: 1px 0; }
.sheet-nav { display: flex; padding-left: 9px; width: 102px; color: #96999d; }
.sheet-nav button { width: 22px; height: 25px; }
.sheet { position: relative; height: 24px; padding: 0 12px; }
.sheet:not(.last-plain):not(.tint-blue):not(.tint-orange):not(.current) { border-right: 1px solid var(--line); }
.last-plain { width: 59px; }
.tint-blue { width: 108px; background: #bdd7ee; border-radius: 0 0 6px 6px; }
.tint-orange { background: #f4b084; border-radius: 0 0 6px 6px; }
.current { background: #fff; color: var(--green); font-weight: 700; border-radius: 0 0 6px 6px; }
.numbered { width: 65px; }
.add-sheet { width: 24px; height: 26px; }
.h-scroll { display: flex; align-items: center; height: 24px; width: 490px; margin-right: 32px; }
.h-grip { width: 2px; height: 8px; margin-right: 11px; background: #b4b6ba; }
.h-thumb { flex: 1; height: 8px; margin-left: 8px; border-radius: 4px; background: #c9cacd; }

/* status bar, its lower edge runs past the window */
.status-bar { display: flex; align-items: center; flex: none; height: 22px; margin-bottom: -4px; padding: 0 15px 0 21px; }
.cloud-doc { gap: 3px; margin-right: 12px; }
.cloud-doc span { margin-right: 5px; }
.script-btn { width: 40px; }
.sum { margin-left: 9px; }
.status-btn { width: 16px; height: 20px; }
.eye { margin-right: 14px; }
.status-bar .drop { margin-right: 7px; padding: 0; height: 20px; gap: 6px; }
.views { display: flex; gap: 8px; margin: 0 7px 0 8px; }
.view { width: 24px; height: 22px; }
.view.on { background: #d0d1d5; border-radius: 4px 4px 0 0; }
.zoom-value { gap: 15px; margin: 0 15px 0 20px; }
.zoom-slider { appearance: none; width: 106px; height: 12px; margin: 0 12px; }
.zoom-slider::-webkit-slider-runnable-track { height: 2px; background: linear-gradient(90deg, #1f5ad8 44%, #acaeb2 44%); }
.zoom-slider::-webkit-slider-thumb { appearance: none; width: 12px; height: 12px; margin-top: -5px; border: 3px solid #fff; border-radius: 50%; background: #85888c; box-shadow: 0 0 1px #777; }
.zoom-in { margin-right: 16px; }

/* floating input-method bar and site mark */
.ime { position: fixed; right: 0; bottom: 20px; width: 208px; height: 32px; }
.ime-bar { display: flex; align-items: center; justify-content: space-between; height: 25px; margin: 5px 0 0 16px; padding: 0 10px 0 22px; background: #fff; border: solid #b8cde4; border-width: 1px 0; }
.ime-mode { color: #0b6fd6; font-size: 15px; font-weight: 700; }
.ime-logo { position: absolute; left: 0; top: 0; }
.watermark { position: fixed; right: 9px; bottom: 7px; display: flex; opacity: .75; }
.mark-text { display: flex; flex-direction: column; }
.mark-name { color: #4a90d9; font-size: 21px; line-height: 24px; font-weight: 700; }
.mark-url { color: #35b56a; font: bold 16px/18px "Liberation Sans", sans-serif; }
```
